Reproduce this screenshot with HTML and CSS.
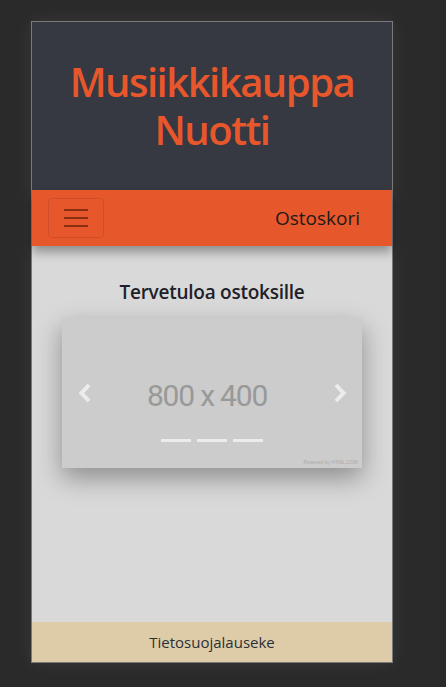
FILE: index.html
```html
<!DOCTYPE html>
<html lang="fi">
<head>
<meta charset="utf-8">
<title>Musiikkikauppa Nuotti</title>
<link rel="stylesheet" href="styles.css">
</head>
<body>
<div class="page">
  <header class="site-header">
    <h1 class="title">Musiikkikauppa Nuotti</h1>
  </header>
  <nav class="navbar">
    <button class="toggler" type="button" aria-label="Valikko">
      <span class="bar"></span><span class="bar"></span><span class="bar"></span>
    </button>
    <a class="nav-link" href="#">Ostoskori</a>
  </nav>
  <main class="main">
    <h5 class="welcome">Tervetuloa ostoksille</h5>
    <div class="carousel">
      <span class="ph-text">800 x 400</span>
      <svg class="arrow arrow-left" width="14" height="20" viewBox="0 0 14 20"><path d="M11 2 L3.5 10 L11 18" fill="none" stroke="#ececec" stroke-width="4" stroke-linejoin="miter"/></svg>
      <svg class="arrow arrow-right" width="14" height="20" viewBox="0 0 14 20"><path d="M3 2 L10.5 10 L3 18" fill="none" stroke="#ececec" stroke-width="4" stroke-linejoin="miter"/></svg>
      <div class="indicators"><span></span><span></span><span></span></div>
      <span class="powered">Powered by HTML.COM</span>
    </div>
  </main>
  <footer class="footer">Tietosuojalauseke</footer>
</div>
</body>
</html>
```
FILE: styles.css
```css
html, body { margin: 0; padding: 0; }
body {
  background: #2a2a2a;
  font-family: "Open Sans", "Noto Sans", sans-serif;
  height: 687px;
  overflow: hidden;
}
.page {
  margin: 21px 0 0 31px;
  width: 360px;
  height: 640px;
  border: 1px solid #7a7a7a;
  box-shadow: 0 0 18px rgba(255,255,255,0.07);
  display: flex;
  flex-direction: column;
}
.site-header {
  background: #363941;
  height: 168px;
  display: flex;
  align-items: center;
  justify-content: center;
}
.title {
  margin: 0;
  color: #e8572c;
  font-size: 40px;
  font-weight: 600;
  line-height: 48px;
  text-align: center;
  letter-spacing: -1.5px;
  width: 300px;
}
.navbar {
  background: #e6582c;
  height: 56px;
  box-sizing: border-box;
  padding: 8px 16px;
  display: flex;
  align-items: center;
  justify-content: space-between;
  box-shadow: 0 6px 10px rgba(0,0,0,0.35);
  position: relative;
  z-index: 1;
}
.toggler {
  width: 56px;
  height: 40px;
  box-sizing: border-box;
  border: 1px solid rgba(0,0,0,0.1);
  border-radius: 4px;
  background: transparent;
  padding: 0;
  display: flex;
  flex-direction: column;
  align-items: center;
  justify-content: center;
  gap: 6px;
}
.bar {
  display: block;
  width: 24px;
  height: 2px;
  background: #8a2e12;
}
.nav-link {
  color: #1f1a18;
  text-decoration: none;
  font-size: 19px;
  margin-right: 16px;
}
.main {
  flex: 1;
  background: #d9d9d9;
  display: flex;
  flex-direction: column;
  align-items: center;
}
.welcome {
  margin: 32px 0 0;
  font-size: 19px;
  font-weight: 600;
  color: #1e2128;
  line-height: 28px;
  letter-spacing: -0.25px;
}
.carousel {
  margin-top: 12px;
  width: 300px;
  height: 150px;
  background: #cccccc;
  position: relative;
  display: flex;
  align-items: center;
  justify-content: center;
  box-shadow: 0 10px 24px rgba(0,0,0,0.35);
}
.ph-text {
  font-family: "Roboto", "Liberation Sans", sans-serif;
  font-size: 30px;
  color: #999999;
  margin: 4px 10px 0 0;
  letter-spacing: -1.2px;
}
.arrow { position: absolute; top: 65px; }
.arrow-left { left: 16px; }
.arrow-right { right: 15px; }
.indicators {
  position: absolute;
  bottom: 26px;
  left: 0;
  right: 0;
  display: flex;
  justify-content: center;
  gap: 6px;
}
.indicators span {
  width: 30px;
  height: 3px;
  background: #ececec;
}
.powered {
  position: absolute;
  right: 4px;
  bottom: 3px;
  font-family: "Liberation Sans", sans-serif;
  font-size: 5px;
  color: #aaaaaa;
}
.footer {
  background: #decca9;
  height: 40px;
  display: flex;
  align-items: center;
  justify-content: center;
  font-size: 15px;
  color: #2b3038;
}
```
